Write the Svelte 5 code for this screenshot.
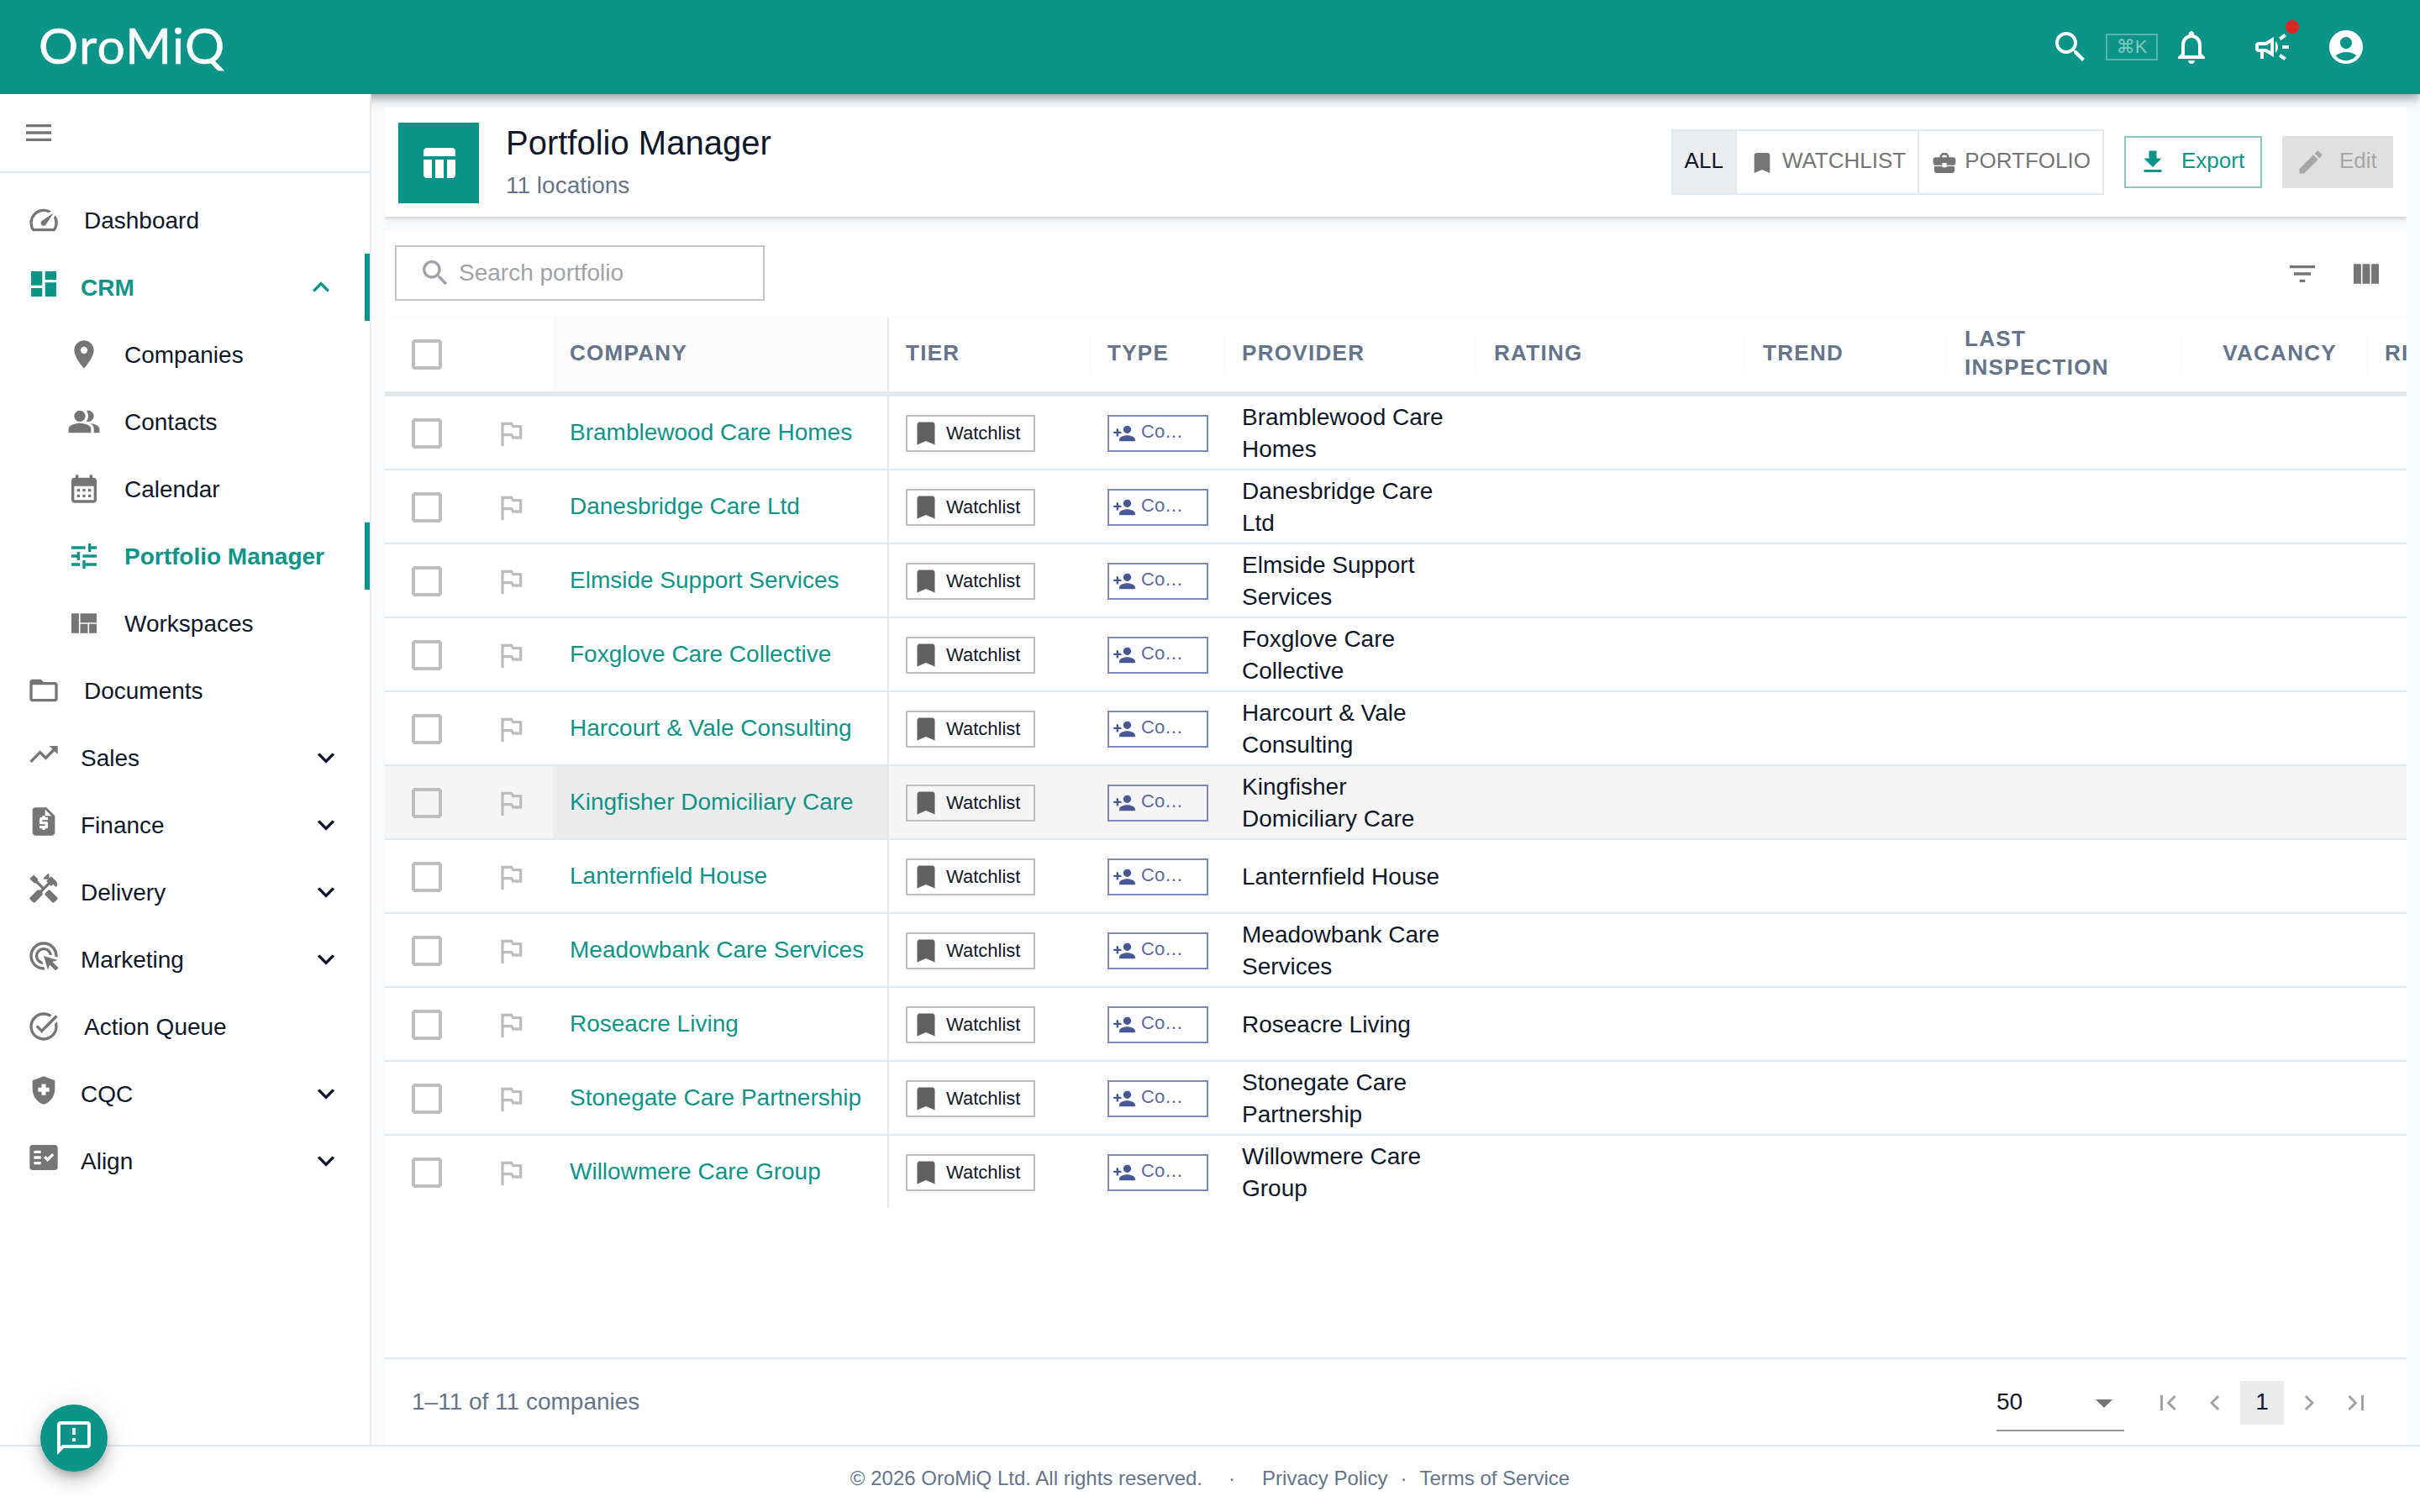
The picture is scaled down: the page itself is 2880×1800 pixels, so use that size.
<script lang="ts">
    type NavItem = {
        label: string;
        icon: string;
        kind?: "leaf" | "group" | "child";
        active?: boolean;
        open?: boolean;
    };

    const icons: Record<string, string> = {
        menu: "M3 18h18v-2H3v2zm0-5h18v-2H3v2zm0-7v2h18V6H3z",
        speed: "m20.38 8.57-1.23 1.85a8 8 0 0 1-.22 7.58H5.07A8 8 0 0 1 15.58 6.85l1.85-1.23A10 10 0 0 0 3.35 19a2 2 0 0 0 1.72 1h13.85a2 2 0 0 0 1.74-1 10 10 0 0 0-.27-10.44zm-9.79 6.84a2 2 0 0 0 2.83 0l5.66-8.49-8.49 5.66a2 2 0 0 0 0 2.83z",
        dashboard: "M3 13h8V3H3v10zm0 8h8v-6H3v6zm10 0h8V11h-8v10zm0-18v6h8V3h-8z",
        place: "M12 2C8.13 2 5 5.13 5 9c0 5.25 7 13 7 13s7-7.75 7-13c0-3.87-3.13-7-7-7zm0 9.5c-1.38 0-2.5-1.12-2.5-2.5s1.12-2.5 2.5-2.5 2.5 1.12 2.5 2.5-1.12 2.5-2.5 2.5z",
        people: "M16.67 13.13C18.04 14.06 19 15.32 19 17v3h4v-3c0-2.18-3.57-3.47-6.33-3.87zM15 12c2.21 0 4-1.79 4-4s-1.79-4-4-4c-.47 0-.91.1-1.33.24C14.5 5.27 15 6.58 15 8s-.5 2.73-1.33 3.76c.42.14.86.24 1.33.24zM9 12c2.21 0 4-1.79 4-4s-1.79-4-4-4-4 1.79-4 4 1.79 4 4 4zM9 13c-2.67 0-8 1.34-8 4v3h16v-3c0-2.66-5.33-4-8-4z",
        calendar: "M19 4h-1V2h-2v2H8V2H6v2H5c-1.11 0-1.99.9-1.99 2L3 20c0 1.1.89 2 2 2h14c1.1 0 2-.9 2-2V6c0-1.1-.9-2-2-2zm0 16H5V10h14v10zM9 14H7v-2h2v2zm4 0h-2v-2h2v2zm4 0h-2v-2h2v2zm-8 4H7v-2h2v2zm4 0h-2v-2h2v2zm4 0h-2v-2h2v2z",
        tune: "M3 17v2h6v-2H3zM3 5v2h10V5H3zm10 16v-2h8v-2h-8v-2h-2v6h2zM7 9v2H3v2h4v2h2V9H7zm14 4v-2H11v2h10zm-6-4h2V7h4V5h-4V3h-2v6z",
        quilt: "M21 5v6.5H9.33V5H21zm-6.33 14v-6.5H9.33V19h5.34zm1-6.5V19H21v-6.5h-5.33zM8.33 19V5H3v14h5.33z",
        folder: "M20 6h-8l-2-2H4c-1.1 0-1.99.9-1.99 2L2 18c0 1.1.9 2 2 2h16c1.1 0 2-.9 2-2V8c0-1.1-.9-2-2-2zm0 12H4V8h16v10z",
        trending: "m16 6 2.29 2.29-4.88 4.88-4-4L2 16.59 3.41 18l6-6 4 4 6.3-6.29L22 12V6z",
        quote: "M14 2H6c-1.1 0-1.99.9-1.99 2L4 20c0 1.1.89 2 1.99 2H18c1.1 0 2-.9 2-2V8l-6-6zm1 9h-4v1h3c.55 0 1 .45 1 1v3c0 .55-.45 1-1 1h-1v1h-2v-1H9v-2h4v-1h-3c-.55 0-1-.45-1-1v-3c0-.55.45-1 1-1h1V8h2v1h2v2zm-2-3V3.5L17.5 8H13z",
        handyman: "m21.67 18.17-5.3-5.3h-.99l-2.54 2.54v.99l5.3 5.3c.39.39 1.02.39 1.41 0l2.12-2.12c.39-.38.39-1.02 0-1.41zM17.34 10.19l1.41-1.41 2.12 2.12c1.17-1.17 1.17-3.07 0-4.24l-3.54-3.54-1.41 1.41V1.71L15.22 1l-3.54 3.54.71.71h2.83l-1.41 1.41 1.06 1.06-2.89 2.89-4.13-4.13V5.06L4.83 2.04 2 4.87 5.03 7.9h1.41l4.13 4.13-.85.85H7.6l-5.3 5.3c-.39.39-.39 1.02 0 1.41l2.12 2.12c.39.39 1.02.39 1.41 0l5.3-5.3v-2.12l5.15-5.15 1.05 1.05z",
        adsClick: "M11.71 17.99C8.53 17.84 6 15.22 6 12c0-3.31 2.69-6 6-6 3.22 0 5.84 2.53 5.99 5.71l-2.1-.63C15.48 9.31 13.89 8 12 8c-2.21 0-4 1.79-4 4 0 1.89 1.31 3.48 3.08 3.89l.63 2.1zM22 12c0 .3-.01.6-.04.9l-1.97-.59c.01-.1.01-.21.01-.31 0-4.42-3.58-8-8-8s-8 3.58-8 8 3.58 8 8 8c.1 0 .21 0 .31-.01l.59 1.97c-.3.03-.6.04-.9.04-5.52 0-10-4.48-10-10S6.48 2 12 2s10 4.48 10 10zm-3.77 4.26L22 15l-10-3 3 10 1.26-3.77 4.27 4.27 1.98-1.98-4.28-4.26z",
        task: "M22 5.18 10.59 16.6l-4.24-4.24 1.41-1.41 2.83 2.83 10-10L22 5.18zm-2.21 5.04c.13.57.21 1.17.21 1.78 0 4.42-3.58 8-8 8s-8-3.58-8-8 3.58-8 8-8c1.58 0 3.04.46 4.28 1.25l1.44-1.44C16.1 2.67 14.13 2 12 2 6.48 2 2 6.48 2 12s4.48 10 10 10 10-4.48 10-10c0-1.19-.22-2.33-.6-3.39l-1.61 1.61z",
        health: "M10.5 13H8v-3h2.5V7.5h3V10H16v3h-2.5v2.5h-3V13zM12 2 4 5v6.09c0 5.05 3.41 9.76 8 10.91 4.59-1.15 8-5.86 8-10.91V5l-8-3z",
        factCheck: "M20 3H4c-1.1 0-2 .9-2 2v14c0 1.1.9 2 2 2h16c1.1 0 2-.9 2-2V5c0-1.1-.9-2-2-2zM10 17H5v-2h5v2zm0-4H5v-2h5v2zm0-4H5V7h5v2zm4.82 6L12 12.16l1.41-1.41 1.41 1.42L17.99 9l1.42 1.42L14.82 15z",
        less: "m12 8-6 6 1.41 1.41L12 10.83l4.59 4.58L18 14z",
        more: "M16.59 8.59 12 13.17 7.41 8.59 6 10l6 6 6-6z",
        search: "M15.5 14h-.79l-.28-.27C15.41 12.59 16 11.11 16 9.5 16 5.91 13.09 3 9.5 3S3 5.91 3 9.5 5.91 16 9.5 16c1.61 0 3.09-.59 4.23-1.57l.27.28v.79l5 4.99L20.49 19l-4.99-5zm-6 0C7.01 14 5 11.99 5 9.5S7.01 5 9.5 5 14 7.01 14 9.5 11.99 14 9.5 14z",
        bell: "M12 22c1.1 0 2-.9 2-2h-4c0 1.1.89 2 2 2zm6-6v-5c0-3.07-1.64-5.64-4.5-6.32V4c0-.83-.67-1.5-1.5-1.5s-1.5.67-1.5 1.5v.68C7.63 5.36 6 7.92 6 11v5l-2 2v1h16v-1l-2-2zm-2 1H8v-6c0-2.48 1.51-4.5 4-4.5s4 2.02 4 4.5v6z",
        campaign: "M18 11v2h4v-2h-4zM16 17.61c.96.71 2.21 1.65 3.2 2.39.4-.53.8-1.07 1.2-1.6-.99-.74-2.24-1.68-3.2-2.4-.4.54-.8 1.08-1.2 1.61zM20.4 5.6c-.4-.53-.8-1.07-1.2-1.6-.99.74-2.24 1.68-3.2 2.4.4.53.8 1.07 1.2 1.6.96-.72 2.21-1.65 3.2-2.4zM4 9c-1.1 0-2 .9-2 2v2c0 1.1.9 2 2 2h1v4h2v-4h1l5 3V6L8 9H4zm5.03 1.71L11 9.53v4.94l-1.97-1.18-.48-.29H4v-2h4.55l.48-.29zM15.5 12c0-1.33-.58-2.53-1.5-3.35v6.69c.92-.81 1.5-2.01 1.5-3.34z",
        account: "M12 2C6.48 2 2 6.48 2 12s4.48 10 10 10 10-4.48 10-10S17.52 2 12 2zm0 4c1.93 0 3.5 1.57 3.5 3.5S13.93 13 12 13s-3.5-1.57-3.5-3.5S10.07 6 12 6zm0 14c-2.03 0-4.43-.82-6.14-2.88C7.55 15.8 9.68 15 12 15s4.45.8 6.14 2.12C16.43 19.18 14.03 20 12 20z",
        table: "M10 10.02h5V21h-5V10.02zM17 21h3c1.1 0 2-.9 2-2v-9h-5v11zm3-18H5c-1.1 0-2 .9-2 2v3h19V5c0-1.1-.9-2-2-2zM3 19c0 1.1.9 2 2 2h3V10H3v9z",
        bookmark: "M17 3H7c-1.1 0-1.99.9-1.99 2L5 21l7-3 7 3V5c0-1.1-.9-2-2-2z",
        briefcase: "M10 16v-1H3.01L3 19c0 1.11.89 2 2 2h14c1.11 0 2-.89 2-2v-4h-7v1h-4zm10-9h-4.01V5l-2-2h-4l-2 2v2H4c-1.1 0-2 .9-2 2v3c0 1.11.89 2 2 2h6v-2h4v2h6c1.1 0 2-.9 2-2V9c0-1.1-.9-2-2-2zm-6 0h-4V5h4v2z",
        download: "M5 20h14v-2H5v2zM19 9h-4V3H9v6H5l7 7 7-7z",
        edit: "M3 17.25V21h3.75L17.81 9.94l-3.75-3.75L3 17.25zM20.71 7.04c.39-.39.39-1.02 0-1.41l-2.34-2.34a.9959.9959 0 0 0-1.41 0l-1.83 1.83 3.75 3.75 1.83-1.83z",
        filter: "M10 18h4v-2h-4v2zM3 6v2h18V6H3zm3 7h12v-2H6v2z",
        columns: "M14.67 5v14H9.33V5h5.34zm1 14H21V5h-5.33v14zm-7.34 0V5H3v14h5.33z",
        checkbox: "M19 5v14H5V5h14m0-2H5c-1.1 0-2 .9-2 2v14c0 1.1.9 2 2 2h14c1.1 0 2-.9 2-2V5c0-1.1-.9-2-2-2z",
        flag: "m14 6-1-2H5v17h2v-7h5l1 2h7V6h-6zm4 8h-4l-1-2H7V6h5l1 2h5v6z",
        personAdd: "M15 12c2.21 0 4-1.79 4-4s-1.79-4-4-4-4 1.79-4 4 1.79 4 4 4zm-9-2V7H4v3H1v2h3v3h2v-3h3v-2H6zm9 4c-2.67 0-8 1.34-8 4v2h16v-2c0-2.66-5.33-4-8-4z",
        dropDown: "m7 10 5 5 5-5z",
        first: "M18.41 16.59 13.82 12l4.59-4.59L17 6l-6 6 6 6zM6 6h2v12H6z",
        prev: "M15.41 7.41 14 6l-6 6 6 6 1.41-1.41L10.83 12z",
        next: "M10 6 8.59 7.41 13.17 12l-4.58 4.59L10 18l6-6z",
        last: "M5.59 7.41 10.18 12l-4.59 4.59L7 18l6-6-6-6zM16 6h2v12h-2z",
        feedback: "M20 2H4c-1.1 0-1.99.9-1.99 2L2 22l4-4h14c1.1 0 2-.9 2-2V4c0-1.1-.9-2-2-2zm0 14H5.17L4 17.17V4h16v12zm-9-4h2v2h-2zm0-6h2v4h-2z",
    };

    const nav: NavItem[] = [
        { label: "Dashboard", icon: "speed", kind: "leaf" },
        { label: "CRM", icon: "dashboard", kind: "group", active: true, open: true },
        { label: "Companies", icon: "place", kind: "child" },
        { label: "Contacts", icon: "people", kind: "child" },
        { label: "Calendar", icon: "calendar", kind: "child" },
        { label: "Portfolio Manager", icon: "tune", kind: "child", active: true },
        { label: "Workspaces", icon: "quilt", kind: "child" },
        { label: "Documents", icon: "folder", kind: "leaf" },
        { label: "Sales", icon: "trending", kind: "group" },
        { label: "Finance", icon: "quote", kind: "group" },
        { label: "Delivery", icon: "handyman", kind: "group" },
        { label: "Marketing", icon: "adsClick", kind: "group" },
        { label: "Action Queue", icon: "task", kind: "leaf" },
        { label: "CQC", icon: "health", kind: "group" },
        { label: "Align", icon: "factCheck", kind: "group" },
    ];

    const headers = ["Tier", "Type", "Provider", "Rating", "Trend", "Last Inspection", "Vacancy"];

    const companies = [
        "Bramblewood Care Homes",
        "Danesbridge Care Ltd",
        "Elmside Support Services",
        "Foxglove Care Collective",
        "Harcourt & Vale Consulting",
        "Kingfisher Domiciliary Care",
        "Lanternfield House",
        "Meadowbank Care Services",
        "Roseacre Living",
        "Stonegate Care Partnership",
        "Willowmere Care Group",
    ];

    let hovered = $state("Kingfisher Domiciliary Care");
</script>

{#snippet icon(name: string, size: number)}
    <svg class="icon" width={size} height={size} viewBox="0 0 24 24" aria-hidden="true">
        <path d={icons[name]} />
    </svg>
{/snippet}

<div class="app">
    <header class="topbar">
        <span class="logo">OroMiQ</span>
        <div class="top-actions">
            {@render icon("search", 48)}
            <kbd>⌘K</kbd>
            <span class="bell">{@render icon("bell", 48)}</span>
            <span class="news">
                {@render icon("campaign", 48)}
                <i class="badge"></i>
            </span>
            <span class="account">{@render icon("account", 48)}</span>
        </div>
    </header>

    <div class="body">
        <aside>
            <div class="collapse">{@render icon("menu", 40)}</div>
            <nav>
                {#each nav as item (item.label)}
                    <a href={"#" + item.icon} class={["nav-item", item.kind, item.active && "active"]}>
                        <span class="nav-icon">{@render icon(item.icon, 40)}</span>
                        <span class="nav-label">{item.label}</span>
                        {#if item.kind === "group"}
                            <span class="chevron">{@render icon(item.open ? "less" : "more", 40)}</span>
                        {/if}
                    </a>
                {/each}
            </nav>
        </aside>

        <main>
            <section class="card page-head">
                <div class="page-icon">{@render icon("table", 48)}</div>
                <div class="titles">
                    <h1>Portfolio Manager</h1>
                    <p>11 locations</p>
                </div>
                <div class="toggles">
                    <button class="selected"><span>All</span></button>
                    <button>{@render icon("bookmark", 32)}<span>Watchlist</span></button>
                    <button>{@render icon("briefcase", 32)}<span>Portfolio</span></button>
                </div>
                <button class="btn outlined">{@render icon("download", 36)}<span>Export</span></button>
                <button class="btn disabled" disabled>{@render icon("edit", 36)}<span>Edit</span></button>
            </section>

            <section class="card grid-card">
                <div class="toolbar">
                    <div class="search">
                        {@render icon("search", 40)}
                        <span>Search portfolio</span>
                    </div>
                    <div class="tools">
                        {@render icon("filter", 40)}
                        {@render icon("columns", 40)}
                    </div>
                </div>

                <div class="row head">
                    <div class="cell check">{@render icon("checkbox", 48)}</div>
                    <div class="cell flag"></div>
                    <div class="cell company">Company</div>
                    {#each headers as header (header)}
                        <div class={["cell", "th", header === "Vacancy" && "numeric"]}>{header}</div>
                    {/each}
                    <div class="cell">RI</div>
                </div>

                <div class="rows">
                    {#each companies as name (name)}
                        <div
                            class={["row", hovered === name && "hover"]}
                            role="row"
                            tabindex="-1"
                            onmouseenter={() => (hovered = name)}>
                            <div class="cell check">{@render icon("checkbox", 48)}</div>
                            <div class="cell flag">{@render icon("flag", 40)}</div>
                            <div class="cell company">{name}</div>
                            <div class="cell tag">
                                <span class="chip">{@render icon("bookmark", 36)}<span>Watchlist</span></span>
                            </div>
                            <div class="cell tag">
                                <span class="chip type">{@render icon("personAdd", 28)}<span>Co…</span></span>
                            </div>
                            <div class="cell provider">{name}</div>
                        </div>
                    {/each}
                </div>

                <div class="pagination">
                    <span class="count">1–11 of 11 companies</span>
                    <div class="select"><span>50</span>{@render icon("dropDown", 48)}</div>
                    <div class="pager">
                        <span>{@render icon("first", 36)}</span>
                        <span>{@render icon("prev", 36)}</span>
                        <span class="current">1</span>
                        <span>{@render icon("next", 36)}</span>
                        <span>{@render icon("last", 36)}</span>
                    </div>
                </div>
            </section>
        </main>
    </div>

    <footer>
        <span>© 2026 OroMiQ Ltd. All rights reserved.</span>
        <span class="dot wide">·</span>
        <span>Privacy Policy</span>
        <span class="dot">·</span>
        <span>Terms of Service</span>
    </footer>

    <button class="fab" aria-label="Feedback">{@render icon("feedback", 48)}</button>
</div>

<style>
    :global(body) {
        margin: 0;
    }

    .app {
        --primary: #0d9488;
        --text: #0f172a;
        --muted: #64748b;
        --line: #e2e8f0;
        box-sizing: border-box;
        position: relative;
        display: flex;
        flex-direction: column;
        width: 2880px;
        height: 1800px;
        overflow: hidden;
        background: #f8fafc;
        color: var(--text);
        font-family: "Liberation Sans", Helvetica, Arial, sans-serif;
        font-size: 28px;
    }

    .app :global(*) {
        box-sizing: border-box;
    }

    button {
        font: inherit;
        margin: 0;
    }

    .icon {
        display: block;
        flex: none;
        fill: currentColor;
    }

    .topbar {
        position: relative;
        display: flex;
        align-items: center;
        justify-content: space-between;
        flex: none;
        height: 112px;
        padding: 0 64px 0 46px;
        background: var(--primary);
        color: #fff;
        box-shadow:
            0 4px 8px -2px rgba(0, 0, 0, 0.2),
            0 8px 10px 0 rgba(0, 0, 0, 0.14),
            0 2px 20px 0 rgba(0, 0, 0, 0.12);
    }

    .logo {
        padding-bottom: 5px;
        font-family: Lato, sans-serif;
        font-size: 59px;
        letter-spacing: 1.3px;
        line-height: 1;
        -webkit-text-stroke: 0.5px currentColor;
    }

    .top-actions {
        display: flex;
        align-items: center;
    }

    kbd {
        display: flex;
        align-items: center;
        justify-content: center;
        width: 62px;
        height: 32px;
        margin-left: 18px;
        border: 2px solid rgba(255, 255, 255, 0.3);
        color: rgba(255, 255, 255, 0.5);
        font-family: "Liberation Sans", "DejaVu Sans", sans-serif;
        font-size: 22px;
    }

    .bell {
        margin-left: 16px;
    }

    .news {
        position: relative;
        margin-left: 48px;
    }

    .badge {
        position: absolute;
        top: -8px;
        right: -8px;
        width: 16px;
        height: 16px;
        border-radius: 50%;
        background: #dc2626;
    }

    .account {
        margin-left: 40px;
    }

    .body {
        display: flex;
        flex: 1;
        min-height: 0;
    }

    aside {
        position: relative;
        flex: none;
        width: 442px;
        border-right: 2px solid var(--line);
        background: #fff;
    }

    .collapse {
        display: flex;
        align-items: center;
        height: 94px;
        padding-left: 26px;
        border-bottom: 2px solid var(--line);
        color: #757575;
    }

    nav {
        padding-top: 16px;
    }

    .nav-item {
        display: flex;
        align-items: center;
        height: 80px;
        padding: 0 32px;
        color: var(--text);
        text-decoration: none;
    }

    .nav-icon {
        color: #757575;
    }

    .nav-label {
        flex: 1;
        padding-top: 2px;
        white-space: nowrap;
    }

    .leaf .nav-label {
        margin-left: 28px;
    }

    .group .nav-label {
        margin-left: 24px;
    }

    .group .nav-icon {
        padding-bottom: 8px;
    }

    .child {
        padding-left: 80px;
    }

    .child .nav-label {
        margin-left: 28px;
    }

    .active {
        border-right: 6px solid var(--primary);
        color: var(--primary);
        font-weight: 700;
    }

    .active .nav-icon {
        color: var(--primary);
    }

    main {
        display: flex;
        flex: 1;
        flex-direction: column;
        gap: 16px;
        min-width: 0;
        padding: 16px 16px 0;
    }

    .card {
        position: relative;
        background: #fff;
    }

    .page-head {
        display: flex;
        align-items: center;
        height: 130px;
        padding: 0 16px;
        box-shadow:
            0 2px 4px rgba(0, 0, 0, 0.14),
            0 4px 12px rgba(0, 0, 0, 0.06);
        clip-path: inset(0 0 -16px 0);
    }

    .page-icon {
        display: flex;
        align-items: center;
        justify-content: center;
        width: 96px;
        height: 96px;
        margin-top: 2px;
        background: var(--primary);
        color: #fff;
    }

    .titles {
        flex: 1;
        margin-left: 32px;
    }

    h1 {
        margin: 0;
        font-size: 40px;
        font-weight: 400;
        line-height: 52px;
    }

    .titles p {
        margin: 0 0 -2px;
        padding-top: 2px;
        color: var(--muted);
        line-height: 46px;
    }

    .toggles {
        display: flex;
        height: 78px;
        border: 2px solid var(--line);
    }

    .toggles button {
        display: flex;
        align-items: center;
        gap: 8px;
        padding: 2px 14px 0;
        border: 0;
        background: none;
        color: #757575;
        font-size: 26px;
        text-transform: uppercase;
    }

    .toggles span {
        padding-bottom: 6px;
    }

    .toggles button + button {
        border-left: 2px solid var(--line);
    }

    .toggles .selected {
        background: #ebecee;
        color: var(--text);
    }

    .btn {
        display: flex;
        align-items: center;
        gap: 16px;
        height: 62px;
        margin-left: 24px;
        padding: 0 18px 0 14px;
        border: 2px solid rgba(13, 148, 136, 0.5);
        background: none;
        color: var(--primary);
        font-size: 26px;
    }

    .btn.outlined {
        width: 164px;
    }

    .btn span {
        padding-bottom: 4px;
    }

    .btn.disabled {
        width: 132px;
        border-color: transparent;
        background: #e0e0e0;
        color: #a6a6a6;
    }

    .grid-card {
        display: flex;
        flex: 1;
        flex-direction: column;
        overflow: hidden;
    }

    .toolbar {
        display: flex;
        align-items: center;
        justify-content: space-between;
        flex: none;
        height: 104px;
        padding: 0 28px 0 12px;
        border-bottom: 2px solid #fbfbfb;
    }

    .search {
        display: flex;
        align-items: center;
        gap: 8px;
        width: 440px;
        height: 66px;
        padding-left: 26px;
        border: 2px solid #c4c4c4;
        color: #9fa2ab;
    }

    .search span {
        padding-bottom: 1px;
    }

    .tools {
        display: flex;
        gap: 36px;
        padding-top: 2px;
        color: #757575;
    }

    .row {
        display: grid;
        grid-template-columns: 100px 100px 400px 240px 160px 300px 320px 240px 280px 220px 200px;
        height: 88px;
        border-bottom: 2px solid var(--line);
    }

    .row:last-child {
        border-bottom-color: transparent;
    }

    .row.hover {
        background: #f5f5f5;
    }

    .cell {
        display: flex;
        align-items: center;
        min-width: 0;
        padding: 0 20px;
    }

    .check,
    .flag {
        justify-content: center;
        color: #bdbdbd;
    }

    .rows .check,
    .rows .flag,
    .rows .tag,
    .rows .provider {
        padding-top: 2px;
    }

    .company {
        border-right: 2px solid var(--line);
        color: var(--primary);
        white-space: nowrap;
    }

    .hover .company {
        background: #ebebeb;
    }

    .provider {
        line-height: 38px;
    }

    .head {
        flex: none;
        height: 94px;
        border-bottom-width: 6px;
        color: var(--muted);
        font-size: 26px;
        font-weight: 700;
        letter-spacing: 1.3px;
        line-height: 34px;
        text-transform: uppercase;
    }

    .head .company {
        background: #fafafa;
        color: var(--muted);
    }

    .head .cell:not(.check) {
        padding-bottom: 5px;
    }

    /* faint column separators, inset from the top and bottom of the header */
    .th {
        background: linear-gradient(#fcfcfc, #fcfcfc) right center / 2px 48px no-repeat;
    }

    .head .numeric {
        justify-content: flex-end;
        padding-right: 37px;
    }

    .rows {
        flex: 1;
    }

    .chip {
        display: flex;
        align-items: center;
        width: 154px;
        height: 44px;
        padding-left: 4px;
        border: 2px solid #bdbdbd;
        font-size: 22px;
    }

    .chip .icon {
        margin-right: 6px;
        color: #616161;
    }

    .chip span {
        padding-bottom: 1px;
    }

    .chip.type {
        width: 120px;
        border-color: #7c89b8;
        color: #5a6aa0;
    }

    .chip.type span {
        padding-bottom: 4px;
    }

    .chip.type .icon {
        color: #475a94;
    }

    .pagination {
        display: flex;
        align-items: center;
        flex: none;
        height: 104px;
        padding: 0 34px 0 32px;
        border-top: 2px solid var(--line);
    }

    .count {
        flex: 1;
        color: var(--muted);
    }

    .select {
        display: flex;
        align-items: center;
        justify-content: space-between;
        width: 152px;
        height: 68px;
        margin-top: 2px;
        padding-top: 2px;
        border-bottom: 2px solid #949494;
    }

    .select span {
        padding-bottom: 2px;
    }

    .select .icon {
        color: #757575;
    }

    .pager {
        display: flex;
        gap: 4px;
        margin-left: 26px;
        margin-top: 2px;
        color: #9fa2ac;
    }

    .pager span {
        display: flex;
        align-items: center;
        justify-content: center;
        width: 52px;
        height: 52px;
    }

    .pager .current {
        padding-bottom: 2px;
        background: #ebebeb;
        color: var(--text);
    }

    footer {
        position: relative;
        display: flex;
        align-items: center;
        justify-content: center;
        flex: none;
        height: 80px;
        padding-bottom: 2px;
        border-top: 2px solid var(--line);
        background: #fff;
        color: var(--muted);
        font-size: 24px;
    }

    .dot {
        margin: 0 15px;
    }

    .dot.wide {
        margin: 0 32px 0 31px;
    }

    .fab {
        position: absolute;
        left: 48px;
        bottom: 48px;
        display: flex;
        align-items: center;
        justify-content: center;
        width: 80px;
        height: 80px;
        padding: 0;
        border: 0;
        border-radius: 50%;
        background: var(--primary);
        color: #fff;
        box-shadow:
            0 6px 10px -2px rgba(0, 0, 0, 0.2),
            0 12px 20px 0 rgba(0, 0, 0, 0.14),
            0 2px 36px 0 rgba(0, 0, 0, 0.12);
    }
</style>
